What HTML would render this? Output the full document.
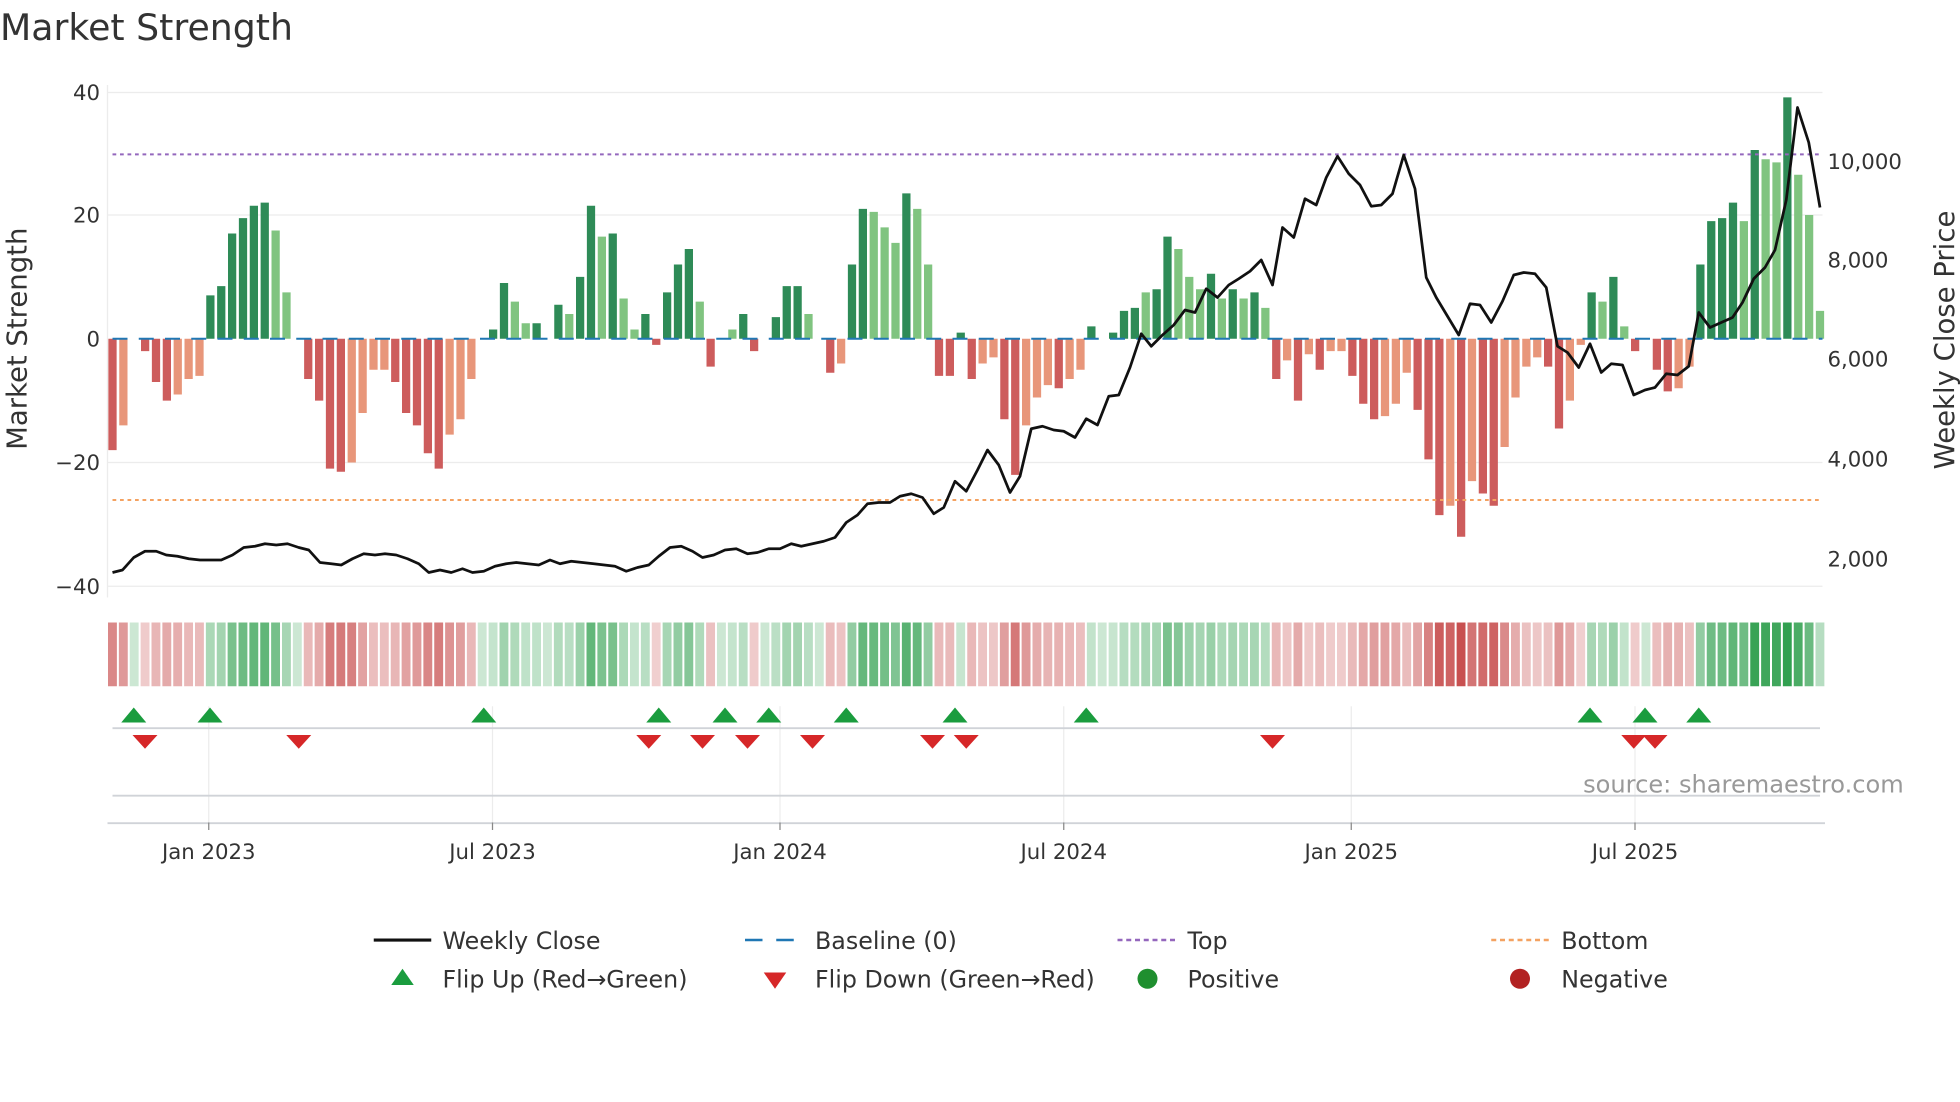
<!DOCTYPE html>
<html><head><meta charset="utf-8"><style>
html,body{margin:0;padding:0;background:#fff;width:1960px;height:1102px;overflow:hidden}
svg{display:block;font-family:"DejaVu Sans","Liberation Sans",sans-serif}
</style></head><body>
<svg id="s" width="1960" height="1102" viewBox="0 0 1568 881.6" xmlns="http://www.w3.org/2000/svg">
<text x="0" y="32" font-size="29" fill="#333">Market Strength</text>
<g stroke="#ececec" stroke-width="1">
<line x1="86" x2="1458" y1="74" y2="74"/><line x1="86" x2="1458" y1="172" y2="172"/>
<line x1="86" x2="1458" y1="370" y2="370"/><line x1="86" x2="1458" y1="469" y2="469"/>
<line x1="86" x2="86" y1="68" y2="478"/>
</g>
<g font-size="17" fill="#333" text-anchor="end">
<text x="80" y="80">40</text><text x="80" y="178">20</text><text x="80" y="277">0</text>
<text x="80" y="376">−20</text><text x="80" y="475">−40</text>
</g>
<g font-size="17" fill="#333">
<text x="1462" y="135">10,000</text><text x="1462" y="214">8,000</text><text x="1462" y="293">6,000</text>
<text x="1462" y="373">4,000</text><text x="1462" y="453">2,000</text>
</g>
<text transform="translate(21,271) rotate(-90)" font-size="22" fill="#333" text-anchor="middle">Market Strength</text>
<text transform="translate(1563,272) rotate(-90)" font-size="22" fill="#333" text-anchor="middle">Weekly Close Price</text>
<g id="bars"></g>
<line x1="90" x2="1458" y1="271" y2="271" stroke="#1f77b4" stroke-width="1.6" stroke-dasharray="12 9"/>
<line x1="90" x2="1458" y1="123.5" y2="123.5" stroke="#9467bd" stroke-width="1.6" stroke-dasharray="3 3"/>
<line x1="90" x2="1458" y1="400" y2="400" stroke="#f4a261" stroke-width="1.6" stroke-dasharray="3 3"/>
<polyline id="price" fill="none" stroke="#111" stroke-width="2.2" stroke-linejoin="round"/>
<g id="heat"></g>
<g stroke="#ececec" stroke-width="1">
<line x1="167" x2="167" y1="565" y2="658"/><line x1="394" x2="394" y1="565" y2="658"/>
<line x1="624" x2="624" y1="565" y2="658"/><line x1="851" x2="851" y1="565" y2="658"/>
<line x1="1081" x2="1081" y1="565" y2="658"/><line x1="1308" x2="1308" y1="565" y2="658"/>
</g>
<line x1="90" x2="1456" y1="582.5" y2="582.5" stroke="#d0d3d8" stroke-width="1.5"/>
<line x1="90" x2="1456" y1="636.5" y2="636.5" stroke="#d0d3d8" stroke-width="1.5"/>
<line x1="86" x2="1460" y1="658.5" y2="658.5" stroke="#d0d3d8" stroke-width="1.5"/>
<g id="tri"></g>
<text x="1523" y="634" font-size="19.3" fill="#999" text-anchor="end">source: sharemaestro.com</text>
<g stroke="#888" stroke-width="1">
<line x1="167" x2="167" y1="658" y2="664"/><line x1="394" x2="394" y1="658" y2="664"/>
<line x1="624" x2="624" y1="658" y2="664"/><line x1="851" x2="851" y1="658" y2="664"/>
<line x1="1081" x2="1081" y1="658" y2="664"/><line x1="1308" x2="1308" y1="658" y2="664"/>
</g>
<g font-size="17" fill="#333" text-anchor="middle">
<text x="167" y="687">Jan 2023</text><text x="394" y="687">Jul 2023</text><text x="624" y="687">Jan 2024</text>
<text x="851" y="687">Jul 2024</text><text x="1081" y="687">Jan 2025</text><text x="1308" y="687">Jul 2025</text>
</g>
<g font-size="19" fill="#333">
<line x1="299" x2="345" y1="752" y2="752" stroke="#111" stroke-width="2.5"/><text x="354" y="759">Weekly Close</text>
<line x1="596" x2="642" y1="752" y2="752" stroke="#1f77b4" stroke-width="2" stroke-dasharray="14 11"/><text x="652" y="759">Baseline (0)</text>
<line x1="894" x2="940" y1="752" y2="752" stroke="#9467bd" stroke-width="2" stroke-dasharray="4 3"/><text x="950" y="759">Top</text>
<line x1="1193" x2="1239" y1="752" y2="752" stroke="#f4a261" stroke-width="2" stroke-dasharray="4 3"/><text x="1249" y="759">Bottom</text>
<polygon points="313,788 331,788 322,775" fill="#1a9c3e"/><text x="354" y="790">Flip Up (Red→Green)</text>
<polygon points="611,778 629,778 620,791" fill="#d62728"/><text x="652" y="790">Flip Down (Green→Red)</text>
<circle cx="918" cy="783" r="8" fill="#1f8f2f"/><text x="950" y="790">Positive</text>
<circle cx="1216" cy="783" r="8" fill="#b22222"/><text x="1249" y="790">Negative</text>
</g>
</svg>
<script>
const V=[[-18,1],[-14,0],[0,1],[-2,1],[-7,1],[-10,1],[-9,0],[-6.5,0],[-6,0],[7,1],[8.5,1],[17,1],[19.5,1],[21.5,1],[22,1],[17.5,0],[7.5,0],[0,1],[-6.5,1],[-10,1],[-21,1],[-21.5,1],[-20,0],[-12,0],[-5,0],[-5,0],[-7,1],[-12,1],[-14,1],[-18.5,1],[-21,1],[-15.5,0],[-13,0],[-6.5,0],[0,1],[1.5,1],[9,1],[6,0],[2.5,0],[2.5,1],[0,1],[5.5,1],[4,0],[10,1],[21.5,1],[16.5,0],[17,1],[6.5,0],[1.5,0],[4,1],[-1,1],[7.5,1],[12,1],[14.5,1],[6,0],[-4.5,1],[0,1],[1.5,0],[4,1],[-2,1],[0,1],[3.5,1],[8.5,1],[8.5,1],[4,0],[0,1],[-5.5,1],[-4,0],[12,1],[21,1],[20.5,0],[18,0],[15.5,0],[23.5,1],[21,0],[12,0],[-6,1],[-6,1],[1,1],[-6.5,1],[-4,0],[-3,0],[-13,1],[-22,1],[-14,0],[-9.5,0],[-7.5,0],[-8,1],[-6.5,0],[-5,0],[2,1],[0,1],[1,1],[4.5,1],[5,1],[7.5,0],[8,1],[16.5,1],[14.5,0],[10,0],[8,0],[10.5,1],[6.5,0],[8,1],[6.5,0],[7.5,1],[5,0],[-6.5,1],[-3.5,0],[-10,1],[-2.5,0],[-5,1],[-2,0],[-2,0],[-6,1],[-10.5,1],[-13,1],[-12.5,0],[-10.5,0],[-5.5,0],[-11.5,1],[-19.5,1],[-28.5,1],[-27,0],[-32,1],[-23,0],[-25,1],[-27,1],[-17.5,0],[-9.5,0],[-4.5,0],[-3,0],[-4.5,1],[-14.5,1],[-10,0],[-1,0],[7.5,1],[6,0],[10,1],[2,0],[-2,1],[0,1],[-5,1],[-8.5,1],[-8,0],[-4.5,0],[12,1],[19,1],[19.5,1],[22,1],[19,0],[30.5,1],[29,0],[28.5,0],[39,1],[26.5,0],[20,0],[4.5,0]];
const n=V.length, x0=90, step=(1456-90)/(n-1);
let b='',h='';
V.forEach((d,i)=>{const v=d[0],x=x0+i*step;const y0=271,y=271-v*4.95;
 let c; if(v>=0) c=d[1]?'#2e8b57':'#80c480'; else c=d[1]?'#cd5c5c':'#e8967a';
 if(v!==0) b+=`<rect x="${(x-3.3).toFixed(1)}" y="${Math.min(y,y0).toFixed(1)}" width="6.6" height="${Math.abs(y-y0).toFixed(1)}" fill="${c}"/>`;
 const a=Math.min(1,0.25+Math.abs(v)/40*0.95);
 const hc=v>=0?`rgba(50,160,80,${a})`:`rgba(200,80,80,${a})`;
 h+=`<rect x="${(x-4.4+0.8).toFixed(1)}" y="498" width="${(step-1.6).toFixed(1)}" height="51" fill="${hc}"/>`;});
document.getElementById('bars').innerHTML=b;document.getElementById('heat').innerHTML=h;
const P=[90,458,98,456,107,446,116,441,125,441,133,444,142,445,151,447,160,448,177,448,186,444,195,438,204,437,212,435,221,436,230,435,239,438,247,440,256,450,265,451,273,452,282,447,291,443,300,444,308,443,317,444,326,447,335,451,343,458,352,456,361,458,370,455,378,458,387,457,396,453,405,451,413,450,422,451,431,452,440,448,448,451,457,449,466,450,475,451,492,453,501,457,510,454,519,452,527,445,536,438,545,437,554,441,562,446,571,444,580,440,589,439,598,443,606,442,615,439,624,439,633,435,641,437,650,435,659,433,668,430,677,418,686,412,694,403,703,402,712,402,720,397,729,395,738,398,747,411,755,406,764,385,773,393,782,376,790,360,799,372,808,394,816,381,825,343,834,341,843,344,851,345,860,350,869,335,878,340,887,317,895,316,904,294,913,267,921,277,930,268,939,260,948,248,956,250,965,231,974,238,983,228,991,223,1000,217,1009,208,1018,228,1026,182,1035,190,1044,159,1053,164,1061,142,1070,125,1079,139,1088,148,1097,165,1105,164,1114,155,1123,124,1132,151,1141,222,1149,238,1158,253,1167,268,1176,243,1184,244,1193,258,1202,241,1211,220,1219,218,1228,219,1237,230,1246,277,1254,282,1263,294,1272,275,1281,298,1289,291,1298,292,1307,316,1316,312,1324,310,1333,299,1342,300,1351,293,1359,250,1368,262,1377,258,1386,254,1394,242,1403,223,1412,214,1420,200,1429,160,1438,86,1447,114,1456,166];
let ps='';for(let i=0;i<P.length;i+=2)ps+=P[i]+','+P[i+1]+' ';
document.getElementById('price').setAttribute('points',ps);
let t='';
[107,168,387,527,580,615,677,764,869,1272,1316,1359].forEach(x=>{t+=`<polygon points="${x-10},578 ${x+10},578 ${x},566" fill="#1a9c3e"/>`});
[116,239,519,562,598,650,746,773,1018,1307,1324].forEach(x=>{t+=`<polygon points="${x-10},588 ${x+10},588 ${x},599" fill="#d62728"/>`});
document.getElementById('tri').innerHTML=t;
</script>
</body></html>
